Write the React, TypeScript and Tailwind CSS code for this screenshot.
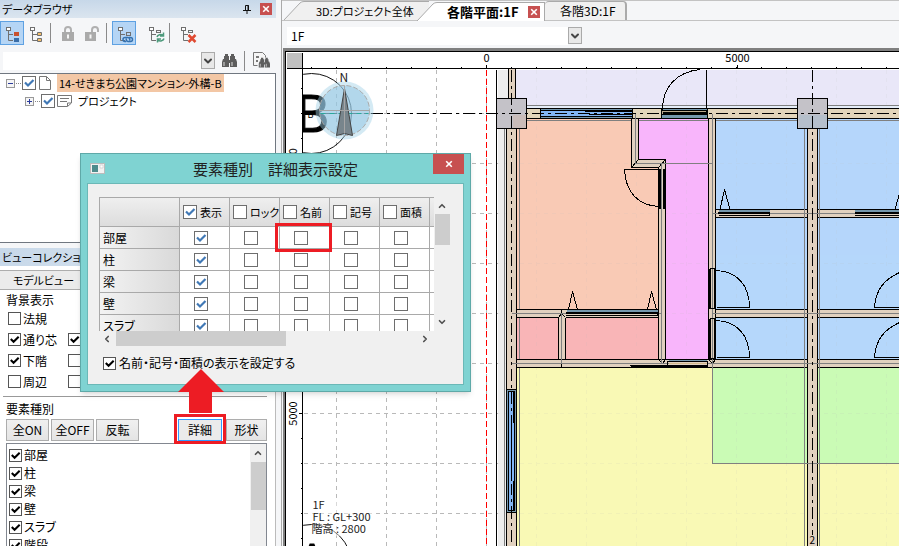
import React from "react";
import { ChevronDown, ChevronLeft, ChevronRight, ChevronUp } from "lucide-react";

const WALL = "#e1d1bf";
const SLATE = "#7698ad";

type TickBoxProps = {
  id?: string;
  label: string;
  checked?: boolean;
  blue?: boolean;
};

const TickBox = ({ id, label, checked = false, blue = false }: TickBoxProps) => (
  <span className="inline-grid shrink-0">
    <input
      id={id}
      type="checkbox"
      aria-label={id ? undefined : label}
      defaultChecked={checked}
      className={
        blue
          ? "peer col-start-1 row-start-1 size-[14px] appearance-none border border-[#6e6e6e] bg-white"
          : "peer col-start-1 row-start-1 size-[13px] appearance-none border border-[#555] bg-white"
      }
    />
    <svg
      viewBox="0 0 14 14"
      className={
        blue
          ? "pointer-events-none invisible col-start-1 row-start-1 size-[14px] text-[#4078b5] peer-checked:visible"
          : "pointer-events-none invisible col-start-1 row-start-1 size-[13px] text-black peer-checked:visible"
      }
    >
      <path d="M3 6.5L6 9.5L11.5 4" fill="none" stroke="currentColor" strokeWidth="2.2" />
    </svg>
  </span>
);

const Separator = () => <span className="mr-[5px] ml-0.5 h-5 w-px bg-[#8a8a8a]" />;

const ToolButton = ({ label, active, children }: { label: string; active?: boolean; children: React.ReactNode }) => (
  <button
    type="button"
    aria-label={label}
    className={
      active
        ? "size-6 shrink-0 border border-[#5ea1e2] bg-[#b5d5f5]"
        : "size-6 shrink-0 border border-transparent"
    }
  >
    <svg viewBox="1 1 22 22" className="size-[22px]" fill="none" stroke="#707070">
      {children}
    </svg>
  </button>
);

const Branches = () => (
  <>
    <rect x="6.5" y="6.5" width="4" height="3" fill="#fff" />
    <path d="M8.5 10V19.5H13M8.5 13.5H13" />
  </>
);

const Binoculars = () => (
  <g fill="#5d5d5d" stroke="none">
    <path d="M4 1h3v2h1v4H3V3h1zM10 1h3v2h1v4H9V3h1z" />
    <path d="M2 6h5l1 2v6H1V9zM10 6h5l1 3v5H9V8zM7 7h3v3H7z" />
    <path d="M3 9v4M11 9v4" stroke="#ddd" />
  </g>
);

const CloseMark = () => (
  <svg viewBox="0 0 10 10" className="size-2" fill="none" stroke="white" strokeWidth="2">
    <path d="M1.5 1.5L8.5 8.5M8.5 1.5L1.5 8.5" />
  </svg>
);

const DataBrowser = () => (
  <section>
    <header className="flex h-[18px] items-center justify-between bg-gradient-to-b from-[#c7d8e9] to-[#dbe5ef] pr-1 pl-0.5">
      <h2 className="text-[11px] leading-4">データブラウザ</h2>
      <div className="flex items-center gap-[9px]">
        <svg viewBox="0 0 8 9" className="h-[9px] w-2" fill="none" stroke="#111">
          <path d="M2.5 5V.5H5.5V5M5 0V5M0 5.5H8M4 6V9" />
        </svg>
        <button type="button" aria-label="閉じる" className="flex size-3 items-center justify-center bg-[#c75050]">
          <CloseMark />
        </button>
      </div>
    </header>
    <div className="flex h-[30px] items-center">
      <ToolButton label="ツリー表示" active>
        <Branches />
        <path d="M14 11h5v4h-5z" fill="#c9502e" stroke="none" />
        <path d="M14 17h5v4h-5z" fill="#3a6ea8" stroke="none" />
      </ToolButton>
      <ToolButton label="階層表示">
        <Branches />
        <path d="M13.5 11.5h4v3h-4zM13.5 17.5h4v3h-4z" fill="#f3bd6a" />
      </ToolButton>
      <Separator />
      <ToolButton label="ロック">
        <path d="M9 12V9a3 3 0 0 1 6 0v3" stroke="#b0b0b0" strokeWidth="2" />
        <path d="M6 11h12v9H6z" fill="#aaa" stroke="none" />
        <path d="M12 13.5v4" stroke="#f5f5f5" strokeWidth="2" />
      </ToolButton>
      <ToolButton label="ロック解除">
        <path d="M12 12V9a3 3 0 0 1 6 0v2" stroke="#b0b0b0" strokeWidth="2" />
        <path d="M5 11h11v9H5z" fill="#aaa" stroke="none" />
        <path d="M10.500 13.500v4" stroke="#f5f5f5" strokeWidth="2" />
      </ToolButton>
      <Separator />
      <ToolButton label="連動" active>
        <Branches />
        <rect x="14.500" y="11.500" width="4" height="3" />
        <path
          d="M14 20.500h-1a2 2 0 0 1 0-4h3a2 2 0 0 1 1.500 3M17 16.500h1.500a2 2 0 0 1 0 4H16a2 2 0 0 1-1.500-3"
          stroke="#3572b0"
          strokeWidth="1.500"
        />
      </ToolButton>
      <span className="w-[7px]" />
      <ToolButton label="更新">
        <Branches />
        <rect x="13.500" y="9.500" width="4" height="2" />
        <path d="M14 16a3.500 3 0 0 1 6-1.500M20.500 11.500v3.500H17M21 17.500a3.500 3 0 0 1-6 1.500M14.500 21.500V18H18" stroke="#4d9a7c" strokeWidth="1.500" />
      </ToolButton>
      <Separator />
      <ToolButton label="削除">
        <Branches />
        <rect x="13.500" y="9.500" width="4" height="2" />
        <path d="M13.500 14L20.500 21M20.500 14L13.500 21" stroke="#e04a32" strokeWidth="2.500" />
      </ToolButton>
    </div>
    <div className="flex h-[25px] items-center pl-[3px]">
      <input aria-label="検索" className="h-[18px] w-[198px] bg-white px-1 text-xs" />
      <button type="button" aria-label="候補" className="flex h-[17px] w-[14px] items-center justify-center border border-[#aaa] bg-[#e8e8e8]">
        <ChevronDown className="size-3 text-[#444]" strokeWidth={4} />
      </button>
      <button type="button" aria-label="検索する" className="ml-1.5">
        <svg viewBox="0 0 17 15" className="h-[15px] w-[17px]">
          <Binoculars />
        </svg>
      </button>
      <span className="ml-1.5 h-5 w-px bg-[#8a8a8a]" />
      <button type="button" aria-label="詳細検索" className="ml-2">
        <svg viewBox="0 0 18 17" className="h-[17px] w-[18px]" fill="none" stroke="#777">
          <path d="M.5 13.500V.5h9l3 3v2M.5 13.500h4" fill="#f5f5f5" />
          <path d="M3 5h3M3 9h2" strokeWidth="2" />
          <g transform="translate(5 5) scale(.75)">
            <Binoculars />
          </g>
        </svg>
      </button>
    </div>
  </section>
);

const Expander = ({ open }: { open?: boolean }) => (
  <svg viewBox="0 0 16 9" className="h-[9px] w-4 shrink-0" fill="none" shapeRendering="crispEdges">
    <rect x=".5" y=".5" width="8" height="8" fill="#f5f5f5" stroke="#999" />
    <path d={open ? "M2 4.5H7" : "M2 4.5H7M4.5 2V7"} stroke="#2c3c9c" />
    <path d="M10 4.5H16" stroke="#888" strokeDasharray="1 1" />
  </svg>
);

const ProjectTree = () => (
  <ul className="h-[170px] border border-l-0 border-[#707780] bg-white text-[11px] leading-[18px]">
    <li>
      <div className="flex h-[18px] items-center pl-1.5">
        <Expander open />
        <TickBox label="14-せきまち公園マンション-外構-B" checked blue />
        <svg viewBox="0 0 12 14" className="ml-[3px] h-[14px] w-3" fill="#fff" stroke="#777">
          <path d="M.5.5H7.500L11.500 4.500V13.500H.5zM7.500.5V4.500H11.500" />
        </svg>
        <span className="ml-1.5 bg-[#f3c7a5] px-0.5">14-せきまち公園マンション-外構-B</span>
      </div>
      <ul>
        <li className="flex h-[18px] items-center pl-[25px]">
          <Expander />
          <TickBox label="プロジェクト" checked blue />
          <svg viewBox="0 0 15 12" className="ml-0.5 h-3 w-[15px]" fill="#fff" stroke="#777">
            <path d="M.5.5H14.500V8L10.500 11.500H.5zM3 3.500H12M3 6.500H10M14 8H10.500V11" />
          </svg>
          <span className="ml-1.5">プロジェクト</span>
        </li>
      </ul>
    </li>
  </ul>
);

const backgroundItems = [
  { name: "法規", checked: false },
  { name: "通り芯", checked: true, next: true },
  { name: "下階", checked: true, next: false },
  { name: "周辺", checked: false, next: false },
];

const elementItems = ["部屋", "柱", "梁", "壁", "スラブ", "階段"];

const pushButton = "h-[22px] border border-[#adadad] bg-gradient-to-b from-[#f0f0f0] to-[#e4e4e4] text-xs leading-5";

const ViewCollection = () => (
  <section className="mt-[5px] flex min-h-0 flex-1 flex-col border-r border-[#bbb] bg-[#f0f0f0]">
    <h2 className="h-[18px] shrink-0 bg-gradient-to-r from-[#c7d8e9] to-[#e3ebf3] pl-0.5 text-[11px] leading-[18px]">ビューコレクション</h2>
    <div className="flex min-h-0 flex-1 flex-col bg-white">
      <button type="button" className="mt-1 h-[20px] w-[88px] shrink-0 border border-l-0 border-[#adadad] bg-[#ebebeb] text-[11px] leading-4">
        モデルビュー
      </button>
      <fieldset className="mt-0.5 shrink-0 pl-2 text-xs">
        <legend className="-ml-0.5 h-4 leading-4">背景表示</legend>
        {backgroundItems.map((item, i) => (
          <div key={item.name} className="flex h-[21px] items-center">
            <span className="flex w-[60px] items-center gap-0.5">
              <TickBox id={`bg-${i}`} label={item.name} checked={item.checked} />
              <label htmlFor={`bg-${i}`}>{item.name}</label>
            </span>
            {item.next !== undefined && <TickBox label="追加表示" checked={item.next} />}
          </div>
        ))}
      </fieldset>
      <hr className="mt-1 mr-2 ml-[3px] border-[#999]" />
      <h3 className="mt-1 ml-1.5 h-4 shrink-0 text-xs leading-4">要素種別</h3>
      <div className="mt-0.5 mr-2 ml-1.5 flex shrink-0">
        <button type="button" className={`${pushButton} w-[43px]`}>全ON</button>
        <button type="button" className={`${pushButton} ml-0.5 w-[43px]`}>全OFF</button>
        <button type="button" className={`${pushButton} ml-0.5 w-[43px]`}>反転</button>
        <span className="relative ml-auto">
          <button type="button" className="h-[22px] w-11 border border-[#3399ff] bg-[#ebebeb] text-xs leading-5">
            詳細
          </button>
          <span className="pointer-events-none absolute -inset-x-1 -top-[5px] -bottom-[3px] border-[3px] border-[#ed1c24]" />
        </span>
        <button type="button" className={`${pushButton} ml-1 w-[41px]`}>形状</button>
      </div>
      <div className="mt-0.5 mr-2 ml-1.5 flex min-h-0 flex-1 overflow-hidden border border-b-0 border-[#828790] bg-white">
        <ul className="flex-1 pt-0.5 pl-0.5 text-xs">
          {elementItems.map((name, i) => (
            <li key={name} className="flex h-[18px] items-center gap-0.5">
              <TickBox id={`el-${i}`} label={name} checked />
              <label htmlFor={`el-${i}`}>{name}</label>
            </li>
          ))}
        </ul>
        <div className="flex w-4 flex-col items-center bg-[#f0f0f0]">
          <ChevronUp className="my-1 size-[10px] shrink-0 text-[#505050]" strokeWidth={4} />
          <span className="h-12 w-[15px] bg-[#cdcdcd]" />
        </div>
      </div>
    </div>
  </section>
);

const Slant = ({ fill }: { fill: string }) => (
  <svg viewBox="0 0 20 19" className="h-[19px] w-5 shrink-0">
    <path d="M0 19L16 2Q17.500 .5 20 .5V19z" fill={fill} />
    <path d="M0 19L16 2Q17.500 .5 20 .5" fill="none" stroke="#aaa" />
  </svg>
);

const ViewTabs = () => (
  <nav className="flex h-[21px] shrink-0 items-end border-t border-b border-[#c3c3c3] pl-0.5 text-[13px] leading-[18px] whitespace-nowrap">
    <a href="#all" className="flex shrink-0">
      <Slant fill="#f0f0f0" />
      <span className="h-[19px] w-[125px] border-t border-[#aaa] bg-[#f0f0f0] pl-3 text-[11px] leading-[18px]">3D:プロジェクト全体</span>
    </a>
    <a href="#plan" className="relative -mb-px -ml-3 flex shrink-0 font-bold">
      <Slant fill="#fff" />
      <span className="flex w-[108px] items-center justify-between border-t border-r border-[#aaa] bg-white pr-1 pl-2.5">
        各階平面:1F
        <span className="flex size-3 items-center justify-center bg-[#c75050]">
          <CloseMark />
        </span>
      </span>
    </a>
    <a href="#floor3d" className="w-[82px] shrink-0 rounded-t border-t border-r-2 border-[#aaa] bg-[#f0f0f0] pl-[15px] text-xs leading-[18px]">
      各階3D:1F
    </a>
  </nav>
);

const verticals = [336, 386, 436, 486, 536, 586, 636, 686, 736, 786, 836, 886];
const horizontals = [113, 163, 213, 263, 313, 363, 413, 463, 513];
const topTicks = Array.from({ length: 24 }, (_, i) => 311 + i * 25);
const sideTicks = Array.from({ length: 19 }, (_, i) => 88 + i * 25);

type BoxProps = { x: number; y: number; w: number; h: number; fill?: string; stroke?: string };

const Box = ({ x, y, w, h, fill = WALL, stroke = "#000" }: BoxProps) => (
  <rect x={x} y={y} width={w} height={h} fill={fill} stroke={stroke} />
);

const Grid = ({ opacity }: { opacity: number }) => (
  <g stroke="#b9b9b9" strokeDasharray="4 4" opacity={opacity}>
    {verticals.map((x) => (
      <path key={x} d={`M${x} 69V546`} />
    ))}
    {horizontals.map((y) => (
      <path key={y} d={`M303 ${y}H899`} />
    ))}
  </g>
);

const Rooms = () => (
  <g stroke="none">
    <rect x="497" y="69" width="11" height="477" fill="#ededed" />
    <rect x="515" y="69" width="384" height="40" fill="#e9e7f8" />
    <rect x="516" y="118" width="148" height="192" fill="#f9cab5" />
    <path d="M638 118H709V360H664V160H638z" fill="#f8b5fb" />
    <rect x="516" y="316" width="144" height="44" fill="#f9b5b7" />
    <rect x="714" y="118" width="185" height="242" fill="#b5d7fb" />
    <rect x="516" y="366" width="383" height="180" fill="#f9f9b5" />
    <rect x="712" y="366" width="187" height="97" fill="#cafbb5" />
    <rect x="526" y="105" width="373" height="4" fill="#e5edf8" />
  </g>
);

const Walls = () => (
  <>
    <path d="M496 69V546" stroke="#000" />
    <Box x={508} y={60} w={7} h={40} />
    <Box x={506} y={128} w={10} h={430} />
    <path d="M504 128V546M519 120V546M526 105H899M526 120H899" stroke="#808080" />
    <Box x={526} y={108} w={380} h={10} fill="#e2d5bb" />
    {/* room partitions */}
    <Box x={708} y={118} w={7} h={245} />
    <path d="M631 118H638V159H665V363H658V167H631z" fill={WALL} stroke="#000" />
    <path d="M631 167L638 159M658 167L665 159" stroke="#000" />
    <Box x={516} y={309} w={142} h={8} />
    <Box x={558} y={317} w={7} h={42} />
    <Box x={516} y={359} w={390} h={8} />
    <Box x={715} y={309} w={190} h={8} />
    <Box x={715} y={209} w={190} h={8} />
    <path d="M558 317L561 313L565 317M658 359L662 363L665 359M708 359L712 363L715 359M561 309V317M561 359V367" fill={WALL} stroke="#000" />
    <Box x={807} y={128} w={10} h={430} />
    <path
      d="M804 128V546M819 128V546M635 113V163H712M661 163V363M712 113V463H899M511 313H661M712 213H899M712 313H899M511 363H899M561 313V363"
      fill="none"
      stroke="#808080"
    />
  </>
);

const Openings = () => (
  <>
    {/* windows */}
    <Box x={540} y={108} w={92} h={10} fill={SLATE} />
    <Box x={540} y={110} w={92} h={6} fill="#82b6f5" />
    <path d="M584 111H632M588 114H632" stroke="#000" />
    <Box x={506} y={389} w={10} h={123} fill={SLATE} />
    <Box x={508} y={391} w={6} h={119} fill="#82b6f5" />
    <path d="M511 420V480M513 391V422M513 480V510" stroke="#000" />
    {/* entrance */}
    <Box x={661} y={108} w={46} h={10} fill={SLATE} />
    <Box x={661} y={110} w={45} h={4} fill="#b9a88c" />
    <path d="M662 113H706" stroke="#000" strokeWidth="3" />
    <path d="M706 69V108M662 109C662 87 676 71 700 69" fill="none" stroke="#000" />
    {/* swing doors */}
    <g fill="none" stroke="#000">
      <path d="M658 169H624C625 192 638 205 658 206" />
      <path d="M716 270C736 271 749 284 749 307H716M716 320C736 321 749 334 749 357H716" />
      <path d="M899 272C884 279 875 289 874 307H899M899 322C884 329 875 339 874 357H899" />
      <path d="M659 168V208M663 168V208" strokeWidth="2" />
      <path d="M709 268V308M714 268V308M709 318V358M714 318V358" strokeWidth="2" />
      <path d="M709 268H715M709 308H715M709 318H715M709 358H715" />
      <path d="M719 211L724 189L730 211M894 211L900 189M568 309L572 291L577 309M647 309L651 291L656 309" />
    </g>
    {/* sliding doors */}
    <path d="M718 210H769M854 210H899M566 310H657M668 360H706" stroke={SLATE} strokeWidth="2" />
    <path d="M717 212H769M854 212H899M565 312H658" stroke="#000" strokeWidth="2" />
    <path d="M718 215H769V212M854 215H899M565 315H657V312M629 365H707V361H667V365" fill="none" stroke="#000" />
    <path d="M630 366H707" stroke="#000" strokeWidth="2" />
    <path d="M668 363H706" stroke="#d2b98c" />
  </>
);

const Axes = () => (
  <>
    <path d="M496 98H526V128H496zM797 98H827V128H797z" fill="#c4c2c8" stroke="#000" />
    <rect x="512" y="114" width="14" height="14" fill="#c9bcb9" stroke="none" />
    <rect x="798" y="114" width="28" height="13" fill="#b5bfcb" stroke="none" />
    <path d="M496 98H526V128H496zM797 98H827V128H797z" stroke="#000" />
    <g stroke="#000" strokeDasharray="12 4 3 4">
      <path d="M324 113H899" />
      <path d="M511 69V546" />
      <path d="M812 69V534" />
    </g>
    <path d="M486 69V546" stroke="#f00" strokeDasharray="6 3" />
  </>
);

const AxisBubbles = () => (
  <g shapeRendering="auto">
    <circle cx="311" cy="113" r="40" stroke="#111" />
    <circle cx="311" cy="564" r="40" stroke="#111" />
    <g className="font-['Open_Sans',sans-serif]" fontSize="52" fill="#000" stroke="#000">
      <text x="295" y="131">B</text>
      <text x="295" y="580">A</text>
    </g>
    <text x="307" y="117" fontSize="9" fill="#000">B</text>
  </g>
);

const Compass = () => (
  <g shapeRendering="auto">
    <circle cx="344" cy="110" r="29" fill="#9fd0e6" opacity=".45" />
    <circle cx="344" cy="110" r="25" fill="#8fc4e2" opacity=".5" />
    <circle cx="344" cy="110" r="25" stroke="#aaa" strokeDasharray="5 2" />
    <path d="M320 113H368" stroke="#2ba99b" strokeDasharray="5 4" />
    <path d="M344 88L336 135L344 133L352 135z" fill="#78858c" stroke="#444" />
    <path d="M319 110H369M344 85V133" stroke="#a5a5a5" />
  </g>
);

const FloorPlan = () => (
  <svg
    viewBox="285 51 614 495"
    preserveAspectRatio="xMinYMin slice"
    className="block h-full w-full font-['Noto_Sans_CJK_JP',sans-serif]"
    fill="none"
    shapeRendering="crispEdges"
  >
    <clipPath id="sheet">
      <rect x="302" y="68" width="597" height="478" />
    </clipPath>
    <rect x="285" y="51" width="614" height="495" fill="#fff" />
    <g transform="translate(.5 .5)">
      <g clipPath="url(#sheet)">
        <Grid opacity={1} />
        <Rooms />
        <Grid opacity={0.12} />
        <Walls />
        <Openings />
        <Axes />
        <AxisBubbles />
        <Compass />
        <text x="339" y="81" fontSize="12" fill="#222">N</text>
        <rect x="311" y="498" width="64" height="37" fill="#fff" opacity=".45" />
        <g fontSize="11" fill="#222">
          <text x="312" y="508">1F</text>
          <text x="312" y="520">FL : GL+300</text>
          <text x="311" y="532">階高 : 2800</text>
        </g>
        <text x="809" y="543" fontSize="10" fill="#000">2</text>
      </g>
      {/* rulers */}
      <rect x="286" y="52" width="16" height="16" fill="#c0c0c0" />
      <path d="M285 546V51H899M286 68H899M302 52V546" stroke="#000" />
      <path d={topTicks.map((x) => `M${x} 66V68`).join("") + "M486 64V68M737 64V68"} stroke="#000" />
      <path d={sideTicks.map((y) => `M300 ${y}H302`).join("") + "M298 413H302M298 163H302"} stroke="#000" />
      <g fontSize="11" fill="#000" textAnchor="middle">
        <text x="486" y="61">0</text>
        <text x="737" y="61">5000</text>
        <text transform="translate(296 413) rotate(-90)">5000</text>
        <text transform="translate(296 163) rotate(-90)">10000</text>
      </g>
    </g>
  </svg>
);

const columns = ["表示", "ロック", "名前", "記号", "面積"];
const tableRows = ["部屋", "柱", "梁", "壁", "スラブ"];

const DisplayTable = () => (
  <div className="h-[134px] w-[335px] overflow-hidden bg-white">
    <table className="w-[381px] table-fixed border-separate border-spacing-0 border-t border-l border-[#a9a9a9] text-xs">
      <thead>
        <tr className="h-[29px] bg-gradient-to-b from-[#efefef] to-[#dcdcdc]">
          <th className="w-20 border-r border-b border-[#a9a9a9] p-0" />
          {columns.map((name) => (
            <th key={name} scope="col" className="w-[50px] border-r border-b border-[#a9a9a9] p-0 font-normal">
              <span className="flex items-center gap-[3px] pl-[3px] text-[11px] whitespace-nowrap">
                <TickBox id={`col-${name}`} label={name} checked={name === "表示"} blue />
                <label htmlFor={`col-${name}`}>{name}</label>
              </span>
            </th>
          ))}
          <th className="w-[50px] border-b border-[#a9a9a9] p-0" />
        </tr>
      </thead>
      <tbody>
        {tableRows.map((row) => (
          <tr key={row} className="h-[22px]">
            <th
              scope="row"
              className="border-r border-b border-[#a9a9a9] bg-gradient-to-r from-[#f3f3f3] to-[#d9d9d9] p-0 pl-[3px] text-left leading-[18px] font-normal"
            >
              {row}
            </th>
            {columns.map((name) => (
              <td key={name} className="relative border-r border-b border-[#a9a9a9] p-0">
                <span className="flex justify-center pr-2">
                  <TickBox label={`${row} ${name}`} checked={name === "表示"} blue />
                </span>
                {row === "部屋" && name === "名前" && (
                  <span className="pointer-events-none absolute -top-1 -right-[3px] -bottom-1 -left-[5px] z-10 border-[3px] border-[#ed1c24]" />
                )}
              </td>
            ))}
            <td className="border-b border-[#a9a9a9] p-0" />
          </tr>
        ))}
      </tbody>
    </table>
  </div>
);

const DetailDialog = () => (
  <div
    role="dialog"
    aria-labelledby="dialog-title"
    className="absolute top-[153px] left-[80px] w-[391px] border border-[#5fa9a8] bg-[#7fd3d2] px-1.5 pb-1.5 shadow-md"
  >
    <header className="relative flex h-[29px] items-center justify-center">
      <svg viewBox="0 0 15 11" className="absolute top-[9px] left-[3px] h-[11px] w-[15px]">
        <rect x=".5" y=".5" width="14" height="10" fill="#f2f2f2" stroke="#bbb" />
        <path d="M2 2H8V9H2z" fill="#4d8c8c" />
        <path d="M10 2H13V5H10z" fill="#fff" stroke="#bbb" strokeWidth=".5" />
      </svg>
      <h2 id="dialog-title" className="text-[15px] leading-6 text-[#222]">要素種別　詳細表示設定</h2>
      <button type="button" aria-label="閉じる" className="absolute top-0 right-0 flex h-5 w-[31px] items-center justify-center bg-[#c75050]">
        <CloseMark />
      </button>
    </header>
    <div className="border border-[#6bb8b7] bg-[#f0f0f0] pt-[13px] pr-3 pb-3 pl-[11px]">
      <div className="flex">
        <DisplayTable />
        <div className="flex w-4 flex-col items-center justify-between pt-1 pb-1">
          <div className="flex flex-col items-center gap-[3px]">
            <ChevronUp className="size-[10px] text-[#505050]" strokeWidth={4} />
            <span className="h-[31px] w-[15px] bg-[#cdcdcd]" />
          </div>
          <ChevronDown className="size-[10px] text-[#505050]" strokeWidth={4} />
        </div>
      </div>
      <div className="flex h-[15px] w-[335px] items-center pl-[3px]">
        <ChevronLeft className="size-[10px] text-[#505050]" strokeWidth={4} />
        <span className="ml-1 h-[15px] w-[170px] bg-[#cdcdcd]" />
        <ChevronRight className="mr-1 ml-auto size-[10px] text-[#505050]" strokeWidth={4} />
      </div>
      <div className="mt-2 flex h-[18px] items-center gap-[3px] pl-1 text-xs">
        <TickBox id="show-names" label="名前・記号・面積の表示を設定する" checked />
        <label htmlFor="show-names">名前・記号・面積の表示を設定する</label>
      </div>
    </div>
  </div>
);

const App = () => (
  <div className="relative flex h-screen overflow-hidden bg-[#f5f6f8] font-['Noto_Sans_CJK_JP',sans-serif] text-xs text-black [font-feature-settings:'palt']">
    <aside className="flex w-[281px] shrink-0 flex-col pr-[5px]">
      <DataBrowser />
      <ProjectTree />
      <ViewCollection />
    </aside>
    <main className="flex min-w-0 flex-1 flex-col border-l border-[#aaa]">
      <ViewTabs />
      <div className="flex h-[27px] shrink-0 items-center pt-0.5 pl-[5px]">
        <select aria-label="階" className="h-[18px] w-[281px] appearance-none bg-white pl-1 text-xs leading-[18px]">
          <option>1F</option>
        </select>
        <span className="flex h-[17px] w-[14px] items-center justify-center border border-[#aaa] bg-[#e8e8e8]">
          <ChevronDown className="size-3 text-[#444]" strokeWidth={4} />
        </span>
      </div>
      <div className="ml-px min-h-0 flex-1 border-t-[3px] border-l-2 border-[#808080]">
        <FloorPlan />
      </div>
    </main>
    <DetailDialog />
    <svg viewBox="0 0 46 44" className="pointer-events-none absolute top-[369px] left-[178px] h-11 w-[46px]">
      <path d="M23 0L46 23H34V44H11V23H0z" fill="#ed1c24" />
    </svg>
  </div>
);

export default App;
